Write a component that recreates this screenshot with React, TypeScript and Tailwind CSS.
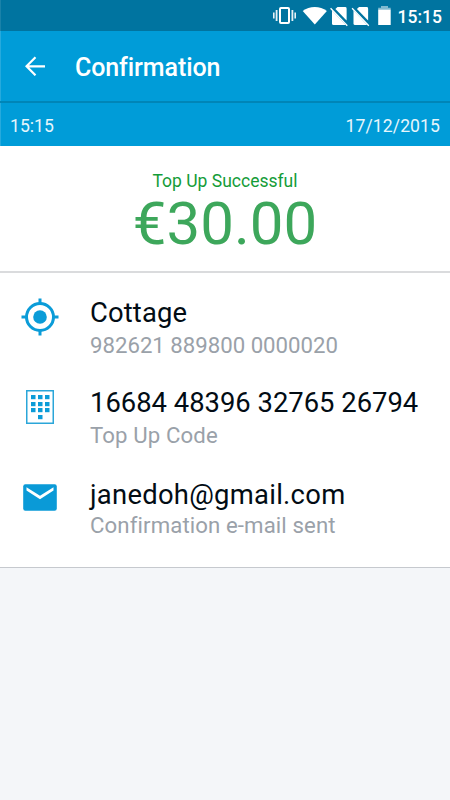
import React from "react";

const details = [
  {
    id: "location",
    title: "Cottage",
    subtitle: "982621 889800 0000020",
    icon: TargetIcon,
    className: "h-[90px] pt-3",
    iconClass: "-mt-px",
    titleClass: "tracking-[0.15px]",
    subtitleClass: "",
  },
  {
    id: "code",
    title: "16684 48396 32765 26794",
    subtitle: "Top Up Code",
    icon: KeypadIcon,
    className: "h-[92px] pt-3",
    iconClass: "-mt-px",
    titleClass: "",
    subtitleClass: "tracking-[0.12px]",
  },
  {
    id: "email",
    title: "janedoh@gmail.com",
    subtitle: "Confirmation e-mail sent",
    icon: MailIcon,
    className: "h-[94px] pt-3",
    iconClass: "-mt-[3px]",
    titleClass: "tracking-[0.28px]",
    subtitleClass: "-mt-0.5 tracking-[0.11px]",
  },
];

function TargetIcon() {
  return (
    <svg viewBox="0 0 38 38" className="h-[38px] w-[38px]" fill="none" stroke="#0b9cd8" strokeWidth="3">
      <circle cx="19" cy="19" r="13.5" />
      <circle cx="19" cy="19" r="6.8" fill="#0b9cd8" stroke="none" />
      <path d="M19 .5v5M19 32.500v5M.5 19h5M32.500 19h5" />
    </svg>
  );
}

function KeypadIcon() {
  const keys = [
    [5, 5], [12, 5], [19, 5],
    [5, 12], [12, 12], [19, 12],
    [5, 18], [12, 18], [19, 18],
    [12, 25],
  ];

  return (
    <svg viewBox="0 0 28 34" className="h-[34px] w-[28px]">
      <rect x="0.75" y="0.75" width="26.500" height="32.500" fill="none" stroke="#2ba6d9" strokeWidth="1.5" />
      {keys.map(([x, y]) => (
        <rect key={`${x}-${y}`} x={x} y={y} width="4.500" height="4.200" fill="#0b9cd8" />
      ))}
    </svg>
  );
}

function MailIcon() {
  return (
    <svg viewBox="0 0 34 27" className="h-[27px] w-[34px]">
      <rect x="0.200" y="0.300" width="33.600" height="26.400" rx="2.200" fill="#0a9ad7" />
      <path d="M3.500 3.200 17 11.700 30.500 3.200V6.600L17 15.300 3.500 6.600z" fill="#fff" />
    </svg>
  );
}

function StatusIcons() {
  return (
    <svg viewBox="0 0 130 24" className="h-6 w-[130px] overflow-visible" fill="#fff">
      {/* Vibrate */}
      <path d="M13 8.500h1.600v6H13zM15.700 6h1.800v11h-1.800zM31.500 6h1.800v11h-1.800zM34.400 8.500H36v6h-1.600z" opacity="0.9" />
      <rect x="20" y="4" width="9" height="15" rx="1" fill="none" stroke="#fff" strokeWidth="2" />
      {/* Wifi */}
      <path d="M42.700 7C49.500 1.700 60 1.700 66.900 7L54.800 20.600z" />
      {/* Missing SIMs */}
      <NoSim x={70} />
      <NoSim x={91.500} />
      {/* Battery */}
      <path d="M121 2h7v1.700h2.700V6H118.200V3.700H121z" opacity="0.5" />
      <path d="M118.200 5.700h12.500V21h-12.500z" />
    </svg>
  );
}

function NoSim({ x }: { x: number }) {
  return (
    <g transform={`translate(${x} 0)`}>
      <path d="M7.500 3h7.700q1.400 0 1.400 1.400v12.200L5.400 5z" />
      <path d="M2 6.500 15.500 20.700q-.4.300-1 .3H3.500Q2 21 2 19.500z" />
      <path d="M.6 4.300 17.300 21.700" stroke="#fff" strokeWidth="1.300" />
    </g>
  );
}

export default function App() {
  return (
    <div className="flex h-[800px] w-[450px] flex-col overflow-hidden bg-[#f4f6f9] font-['Roboto',sans-serif]">
      {/* Status Bar */}
      <div className="flex h-[31px] shrink-0 items-center justify-end bg-[#0074a0] pr-2 pb-px text-white shadow-[inset_1px_0_0_#1a82a9]">
        <div className="mt-0.5 mr-2">
          <StatusIcons />
        </div>
        <span className="pt-1 text-[17.500px] leading-6 font-medium">15:15</span>
      </div>

      {/* App Bar */}
      <header className="flex h-[72px] shrink-0 items-center border-b-2 border-[#0085b7] bg-[#009cd8] text-white shadow-[inset_1px_0_0_#26aadd]">
        <button className="ml-[25px]" aria-label="Back">
          <svg viewBox="0 0 20 20" className="h-5 w-5" fill="none" stroke="currentColor" strokeWidth="2.200">
            <path d="M20 10.300H2M10.500 1.300 1.500 10.300l9 9" />
          </svg>
        </button>
        <h1 className="ml-[30px] pt-1 text-[25px] leading-8 font-medium tracking-[-0.1px]">Confirmation</h1>
      </header>

      {/* Date Bar */}
      <div className="flex h-[43px] shrink-0 items-center justify-between bg-[#009cd8] px-2.5 pt-1 text-[17.600px] text-[#e6f6fc] shadow-[inset_1px_0_0_#26aadd]">
        <span>15:15</span>
        <span className="tracking-[0.08px]">17/12/2015</span>
      </div>

      {/* Amount */}
      <section className="flex h-[127px] shrink-0 flex-col items-center border-b-2 border-[#dadbdd] bg-white pt-[25px]">
        <p className="text-[17.500px] leading-5 text-[#149c38]">Top Up Successful</p>
        <p className="pt-px text-[60px] leading-[64px] text-[#3da75b]">€30.00</p>
      </section>

      {/* Details */}
      <section className="flex h-[295px] shrink-0 flex-col border-b border-[#c6c9ce] bg-white pt-3">
        {details.map((item) => {
          const Icon = item.icon;

          return (
            <div key={item.id} className={`flex shrink-0 ${item.className}`}>
              <div className={`flex h-[42px] w-20 shrink-0 items-center justify-center ${item.iconClass}`}>
                <Icon />
              </div>
              <div className="ml-2.5">
                <h2 className={`text-[27.400px] leading-8 text-[#020c14] ${item.titleClass}`}>{item.title}</h2>
                <p className={`text-[22.200px] leading-8 text-[#9aa1a9] ${item.subtitleClass}`}>{item.subtitle}</p>
              </div>
            </div>
          );
        })}
      </section>
    </div>
  );
}
